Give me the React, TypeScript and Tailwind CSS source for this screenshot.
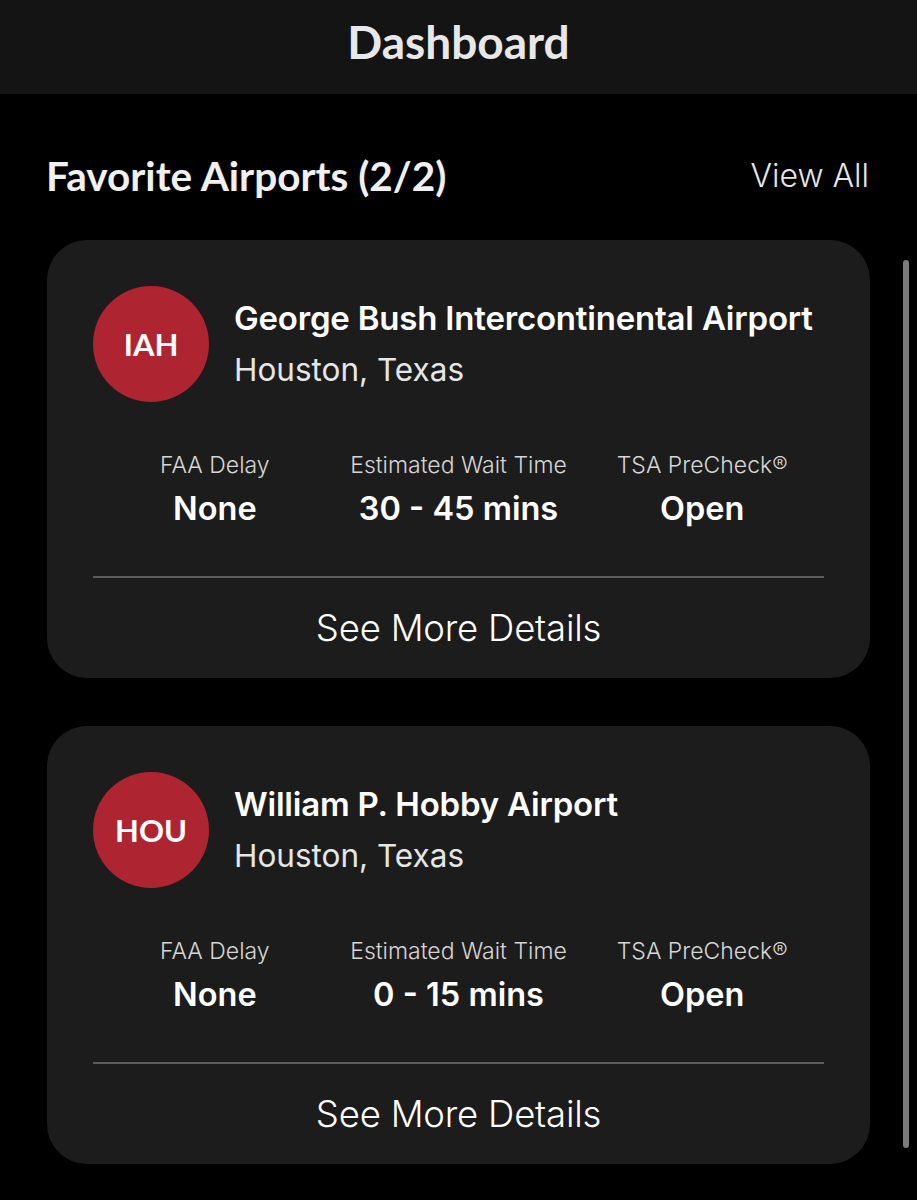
import React from "react";

type Airport = { code: string; name: string; city: string; delay: string; wait: string; pre: string };

const airports: Airport[] = [
  { code: "IAH", name: "George Bush Intercontinental Airport", city: "Houston, Texas", delay: "None", wait: "30 - 45 mins", pre: "Open" },
  { code: "HOU", name: "William P. Hobby Airport", city: "Houston, Texas", delay: "None", wait: "0 - 15 mins", pre: "Open" },
];

const sf = { fontFamily: "Inter, 'Noto Sans', sans-serif" };
const av = { fontFamily: "Lato, 'Noto Sans', sans-serif" };

function Stat({ label, value }: { label: string; value: string }) {
  return (
    <div className="flex flex-col items-center">
      <div className="text-[23px] leading-[28px] font-light text-[#d6d6d6]">{label}</div>
      <div className="mt-[13px] text-[32.5px] leading-[34px] font-semibold text-white">{value}</div>
    </div>
  );
}

function Card({ a }: { a: Airport }) {
  return (
    <div className="rounded-[40px] bg-[#1c1c1c] pt-[46px] px-[46px] h-[438px] flex flex-col">
      <div className="flex items-center h-[116px]">
        <div className="w-[116px] h-[116px] rounded-full bg-[#ae2430] flex items-center justify-center shrink-0">
          <span className="text-white text-[31px] font-bold" style={av}>{a.code}</span>
        </div>
        <div className="ml-[25px] flex flex-col mt-[-3px]">
          <div className="text-[33px] leading-[40px] font-semibold text-white tracking-[-0.2px] whitespace-nowrap">{a.name}</div>
          <div className="mt-[15px] text-[31.5px] leading-[34px] font-normal text-[#e6e6e6]">{a.city}</div>
        </div>
      </div>
      <div className="mt-[49px] grid grid-cols-3">
        <Stat label="FAA Delay" value={a.delay} />
        <Stat label="Estimated Wait Time" value={a.wait} />
        <Stat label="TSA PreCheck®" value={a.pre} />
      </div>
      <div className="mt-[50px] h-[2px] bg-[#5c5c5c]" />
      <div className="flex-1 flex items-center justify-center">
        <span className="text-[36.5px] font-light text-white tracking-[-0.2px]">See More Details</span>
      </div>
    </div>
  );
}

export default function App() {
  return (
    <div className="relative w-[917px] h-[1200px] bg-black overflow-hidden" style={sf}>
      <div className="h-[94px] bg-[#141414] flex items-center justify-center">
        <span className="text-[46px] font-bold text-[#e8e8e8] mt-[-12px]" style={av}>Dashboard</span>
      </div>
      <div className="px-[47px]">
        <div className="flex items-center justify-between h-[44px]" style={{ marginTop: 60 }}>
          <span className="text-[40.5px] font-bold text-[#f0f0f0] ml-[-1px]" style={av}>Favorite Airports (2/2)</span>
          <span className="text-[32px] font-light text-[#e6e6e6] mr-[1px]">View All</span>
        </div>
        <div className="mt-[42px] flex flex-col gap-[48px]">
          {airports.map((a) => (
            <Card key={a.code} a={a} />
          ))}
        </div>
      </div>
      <div className="absolute left-[903px] top-[260px] w-[6px] h-[888px] rounded-full bg-[#7c7c7c]" />
    </div>
  );
}
